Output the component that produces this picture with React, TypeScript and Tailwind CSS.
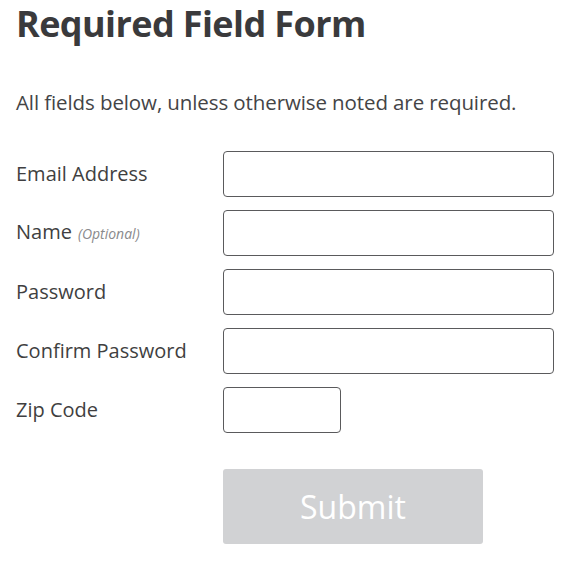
import React from "react";

const fields = [
  { label: "Email Address", optional: false, zip: false },
  { label: "Name", optional: true, zip: false },
  { label: "Password", optional: false, zip: false },
  { label: "Confirm Password", optional: false, zip: false },
  { label: "Zip Code", optional: false, zip: true },
];

export default function App() {
  return (
    <div
      className="w-[576px] h-[564px] bg-white px-4 text-[#3b3b3d]"
      style={{ fontFamily: '"Open Sans", "Noto Sans", sans-serif' }}
    >
      <h1 className="pt-[1px] text-[36px] leading-[46px] font-bold tracking-[-0.6px] text-[#3a3a3c]">
        Required Field Form
      </h1>
      <p className="mt-[42px] text-[20.5px] leading-[26px] tracking-[-0.1px] text-[#444446]">
        All fields below, unless otherwise noted are required.
      </p>
      <form className="mt-[36px] flex flex-col gap-[13px]" onSubmit={(e) => e.preventDefault()}>
        {fields.map((f) => (
          <div key={f.label} className="flex items-center">
            <label className="w-[207px] shrink-0 text-[20px] leading-[26px] text-[#3f3f41]">
              {f.label}
              {f.optional && (
                <span className="ml-[6px] text-[14px] italic text-[#8a8a8c]">(Optional)</span>
              )}
            </label>
            <input
              className={`h-[46px] rounded-[4px] border border-[#5a5a5c] bg-white ${
                f.zip ? "w-[118px]" : "w-[331px]"
              }`}
            />
          </div>
        ))}
        <div className="flex pt-[23px]">
          <div className="w-[207px] shrink-0" />
          <button
            type="submit"
            className="h-[75px] w-[260px] rounded-[3px] bg-[#d1d2d4] text-[32px] text-white"
          >
            Submit
          </button>
        </div>
      </form>
    </div>
  );
}
